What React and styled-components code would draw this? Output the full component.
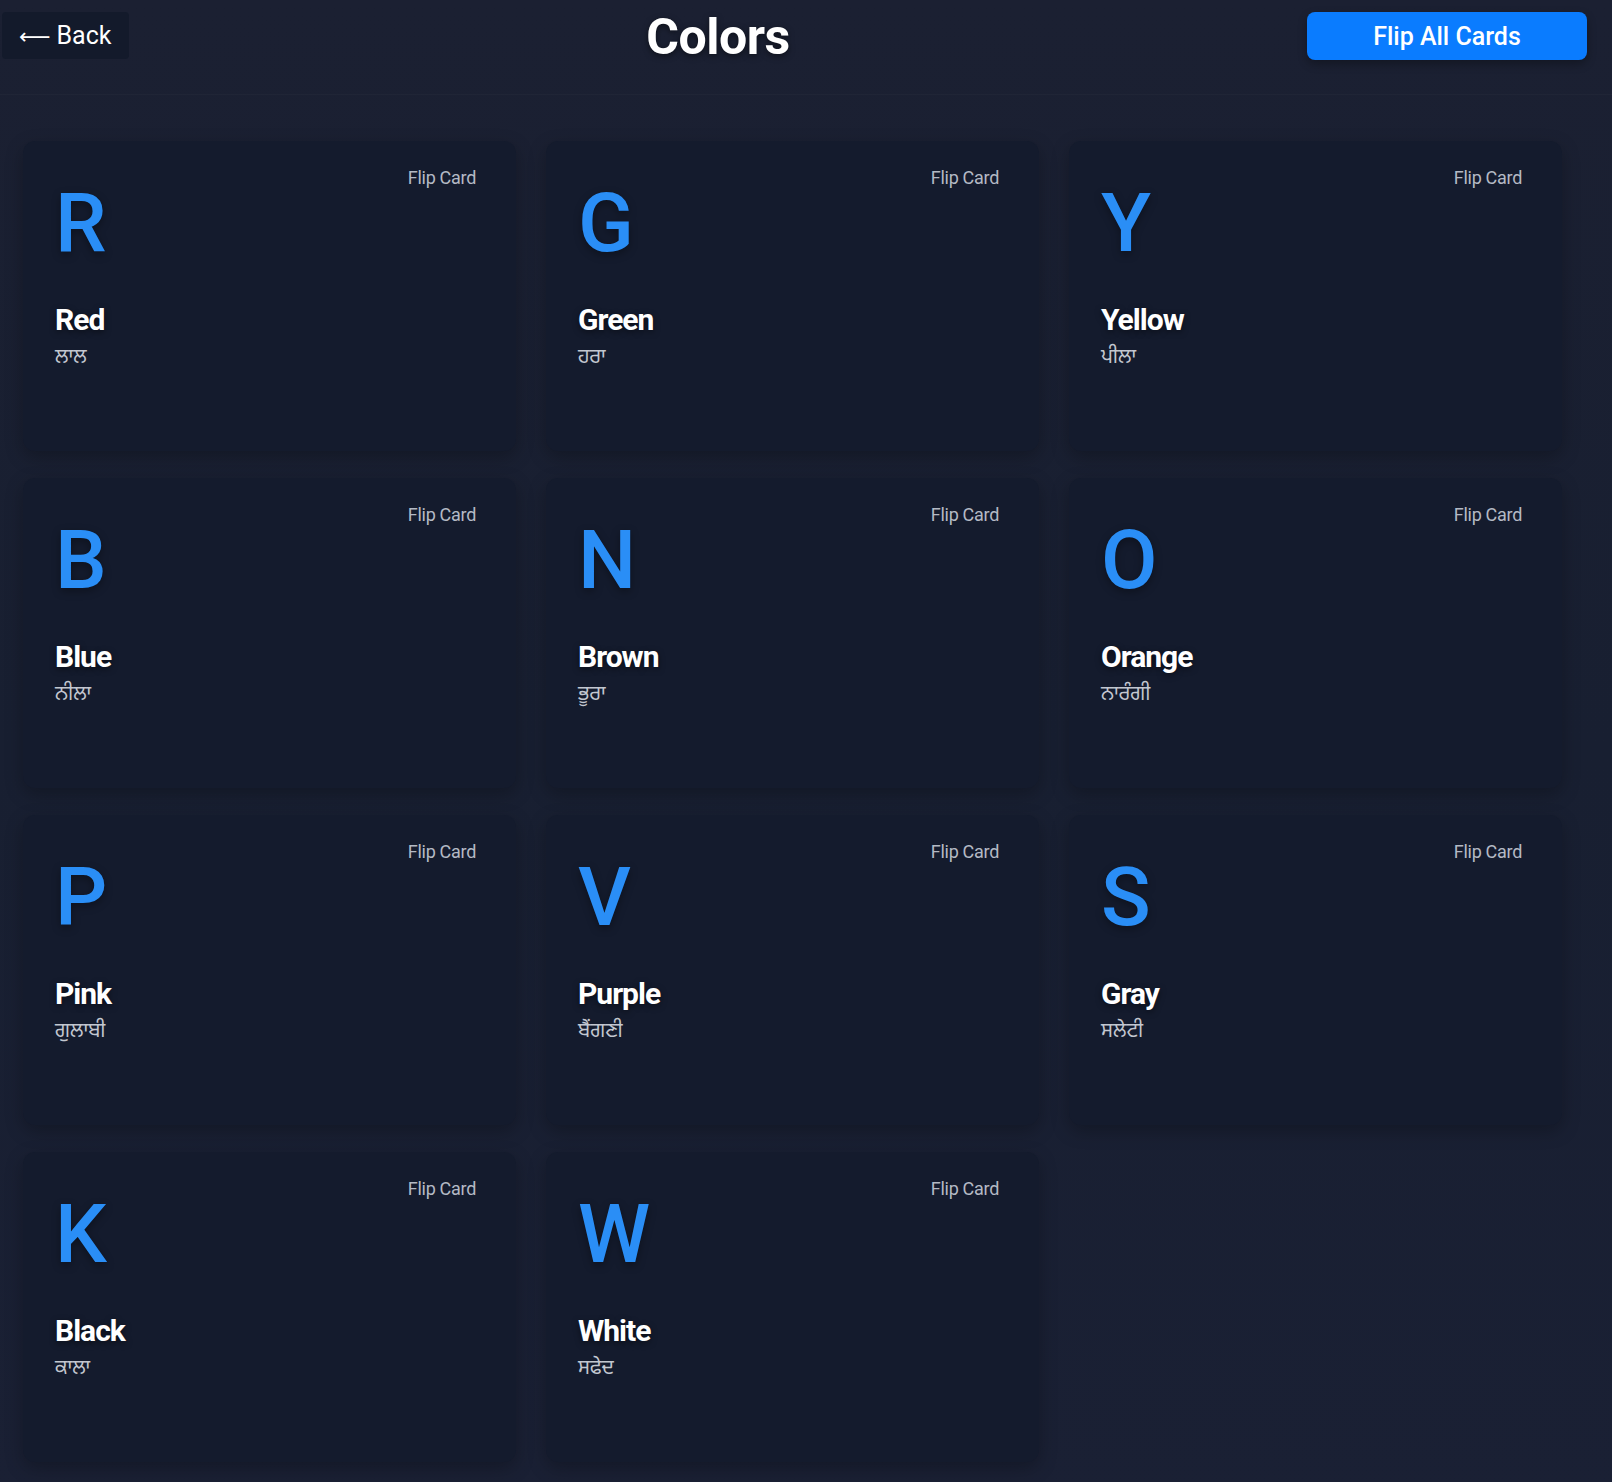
import React, { useState } from "react";
import styled, { createGlobalStyle } from "styled-components";

const colors = [
  { letter: "R", name: "Red", local: "ਲਾਲ" },
  { letter: "G", name: "Green", local: "ਹਰਾ" },
  { letter: "Y", name: "Yellow", local: "ਪੀਲਾ" },
  { letter: "B", name: "Blue", local: "ਨੀਲਾ" },
  { letter: "N", name: "Brown", local: "ਭੂਰਾ" },
  { letter: "O", name: "Orange", local: "ਨਾਰੰਗੀ" },
  { letter: "P", name: "Pink", local: "ਗੁਲਾਬੀ" },
  { letter: "V", name: "Purple", local: "ਬੈਂਗਣੀ" },
  { letter: "S", name: "Gray", local: "ਸਲੇਟੀ" },
  { letter: "K", name: "Black", local: "ਕਾਲਾ" },
  { letter: "W", name: "White", local: "ਸਫੇਦ" },
];

function App() {
  const [flipped, setFlipped] = useState({});

  const flipAll = () => {
    const next = {};
    colors.forEach((c) => (next[c.letter] = !flipped[c.letter]));
    setFlipped(next);
  };

  return (
    <Page>
      <GlobalStyle />
      <Header>
        <BackButton>
          <Arrow>⟵</Arrow>Back
        </BackButton>
        <Title>Colors</Title>
        <FlipAllButton onClick={flipAll}>Flip All Cards</FlipAllButton>
      </Header>
      <Grid>
        {colors.map((c) => (
          <Card
            key={c.letter}
            onClick={() =>
              setFlipped({ ...flipped, [c.letter]: !flipped[c.letter] })
            }
          >
            <FlipLabel>Flip Card</FlipLabel>
            <Letter>{c.letter}</Letter>
            <Name>{c.name}</Name>
            <Local>{c.local}</Local>
          </Card>
        ))}
      </Grid>
    </Page>
  );
}

export default App;

// styled-components
const GlobalStyle = createGlobalStyle`
  html, body {
    margin: 0;
    padding: 0;
    background: #1b2133;
  }
  body {
    font-family: Roboto, "Noto Sans", "Liberation Sans", sans-serif;
  }
`;

const Page = styled.div`
  min-height: 1482px;
  background: linear-gradient(180deg, #1b2032 0%, #181f31 50%, #1a2034 100%);
  box-sizing: border-box;
`;

const Header = styled.header`
  height: 95px;
  display: flex;
  align-items: flex-start;
  justify-content: space-between;
  padding: 12px 25px 0 2px;
  box-sizing: border-box;
  border-bottom: 1px solid rgba(255, 255, 255, 0.025);
`;

const BackButton = styled.button`
  width: 127px;
  height: 47px;
  padding: 0 0 0 17px;
  display: flex;
  align-items: center;
  gap: 6px;
  background: #131a2b;
  color: #ffffff;
  border: none;
  border-radius: 4px;
  font-family: Roboto, "Liberation Sans", sans-serif;
  font-size: 25px;
  cursor: pointer;
`;

const Arrow = styled.span`
  font-family: "DejaVu Sans", sans-serif;
  font-size: 22px;
  margin-top: 2px;
`;

const Title = styled.h1`
  margin: 0;
  margin-top: -2px;
  color: #ffffff;
  font-family: Roboto, "Liberation Sans", sans-serif;
  font-size: 50px;
  font-weight: 700;
  letter-spacing: -0.5px;
  line-height: 54px;
  text-shadow: 0 2px 6px rgba(0, 0, 0, 0.5);
`;

const FlipAllButton = styled.button`
  width: 280px;
  height: 48px;
  background: #0a7cff;
  color: #ffffff;
  border: none;
  border-radius: 8px;
  font-family: Roboto, "Liberation Sans", sans-serif;
  font-size: 25px;
  font-weight: 500;
  box-shadow: 0 4px 10px rgba(0, 0, 0, 0.3);
  cursor: pointer;
`;

const Grid = styled.div`
  display: grid;
  grid-template-columns: repeat(3, 493px);
  grid-auto-rows: 310px;
  column-gap: 30px;
  row-gap: 27px;
  padding: 46px 0 40px 23px;
`;

const Card = styled.div`
  position: relative;
  background: #141b2d;
  border-radius: 12px;
  padding: 34px 32px;
  box-sizing: border-box;
  box-shadow: 0 6px 18px rgba(0, 0, 0, 0.25);
  cursor: pointer;
`;

const FlipLabel = styled.span`
  position: absolute;
  top: 26px;
  right: 40px;
  color: #b4b9c4;
  font-family: Roboto, "Liberation Sans", sans-serif;
  font-size: 18px;
  letter-spacing: -0.3px;
`;

const Letter = styled.div`
  color: #2a8ef6;
  font-family: Roboto, "Liberation Sans", sans-serif;
  font-size: 82px;
  font-weight: 500;
  line-height: 96px;
  text-shadow: 0 3px 8px rgba(0, 0, 0, 0.35);
`;

const Name = styled.div`
  margin-top: 31px;
  color: #ffffff;
  font-family: Roboto, "Liberation Sans", sans-serif;
  font-size: 30px;
  font-weight: 700;
  letter-spacing: -1px;
  line-height: 36px;
  text-shadow: 0 2px 6px rgba(0, 0, 0, 0.5);
`;

const Local = styled.div`
  margin-top: 7px;
  color: #c3c7d0;
  font-family: "Noto Sans Gurmukhi", "Noto Sans", "Liberation Sans", sans-serif;
  font-size: 20px;
  line-height: 26px;
`;
